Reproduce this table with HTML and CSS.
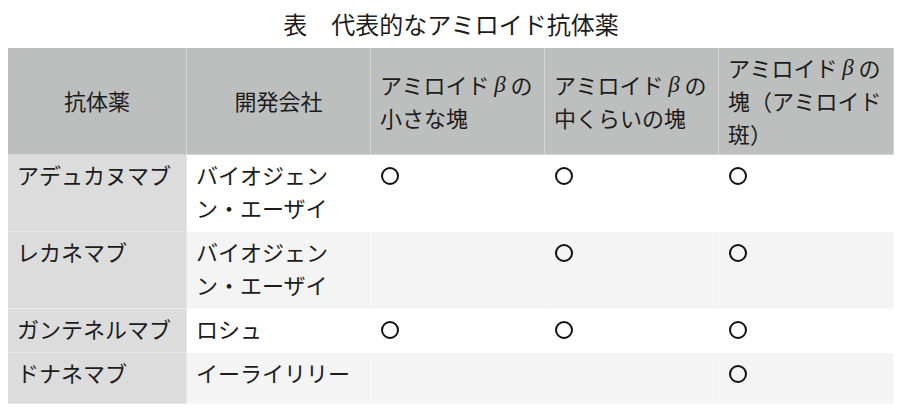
FILE: index.html
```html
<!DOCTYPE html>
<html lang="ja">
<head>
<meta charset="utf-8">
<link rel="stylesheet" href="styles.css">
</head>
<body>
<div class="page">
  <div class="caption">表　代表的なアミロイド抗体薬</div>
  <table class="drugs">
    <colgroup>
      <col class="c1">
      <col class="c2">
      <col class="c3">
      <col class="c4">
      <col class="c5">
    </colgroup>
    <thead>
      <tr>
        <th class="center">抗体薬</th>
        <th class="center">開発会社</th>
        <th><span class="ln">アミロイド<span class="beta">β</span>の</span><br><span class="ln">小さな塊</span></th>
        <th><span class="ln">アミロイド<span class="beta">β</span>の</span><br><span class="ln">中くらいの塊</span></th>
        <th><span class="ln">アミロイド<span class="beta">β</span>の</span><br><span class="ln">塊（アミロイド</span><br><span class="ln">斑）</span></th>
      </tr>
    </thead>
    <tbody>
      <tr>
        <td class="name">アデュカヌマブ</td>
        <td>バイオジェン<br>ン・エーザイ</td>
        <td><span class="mark" aria-label="○"></span></td>
        <td><span class="mark" aria-label="○"></span></td>
        <td><span class="mark" aria-label="○"></span></td>
      </tr>
      <tr class="alt">
        <td class="name">レカネマブ</td>
        <td>バイオジェン<br>ン・エーザイ</td>
        <td></td>
        <td><span class="mark" aria-label="○"></span></td>
        <td><span class="mark" aria-label="○"></span></td>
      </tr>
      <tr>
        <td class="name">ガンテネルマブ</td>
        <td>ロシュ</td>
        <td><span class="mark" aria-label="○"></span></td>
        <td><span class="mark" aria-label="○"></span></td>
        <td><span class="mark" aria-label="○"></span></td>
      </tr>
      <tr class="alt last">
        <td class="name">ドナネマブ</td>
        <td>イーライリリー</td>
        <td></td>
        <td></td>
        <td><span class="mark" aria-label="○"></span></td>
      </tr>
    </tbody>
  </table>
</div>
</body>
</html>
```

FILE: styles.css
```css
html, body {
  margin: 0;
  padding: 0;
  background: #ffffff;
}

body {
  font-family: "Noto Sans CJK JP", "Noto Sans", sans-serif;
  color: #1c1c1c;
}

.page {
  padding: 7px 9px 0 7px;
}

.caption {
  text-align: center;
  font-size: 24px;
  line-height: 34px;
  margin-bottom: 6px;
  padding-left: 2px;
}

.drugs {
  width: 886px;
  border-collapse: collapse;
  table-layout: fixed;
  font-size: 22px;
}

.c1 { width: 179px; }
.c2 { width: 184px; }
.c3 { width: 174px; }
.c4 { width: 174px; }
.c5 { width: 175px; }

.drugs th,
.drugs td {
  border: 1px solid rgba(255, 255, 255, 0.35);
  padding: 3px 9px 7px 9px;
  line-height: 33px;
  vertical-align: top;
  text-align: left;
  font-weight: normal;
}

.drugs th {
  background: #bdbfbe;
  vertical-align: middle;
  padding: 3px 9px 4px 9px;
  line-height: 33px;
}

.drugs th.center {
  text-align: center;
}

.ln {
  white-space: nowrap;
}

.beta {
  display: inline-block;
  width: 21px;
  text-align: center;
  font-family: "Liberation Serif", serif;
  font-style: italic;
  font-size: 23px;
  line-height: 33px;
  vertical-align: top;
}

.drugs td {
  background: #ffffff;
}

.drugs tr.alt td {
  background: #f4f4f4;
}

.drugs td.name,
.drugs tr.alt td.name {
  background: #dcdcdc;
  padding-right: 4px;
}

.drugs tr.last td {
  padding-bottom: 14px;
}

.mark {
  display: inline-block;
  width: 14px;
  height: 14px;
  border: 2px solid #111111;
  border-radius: 50%;
  margin-left: 1px;
  vertical-align: -1px;
}
```
